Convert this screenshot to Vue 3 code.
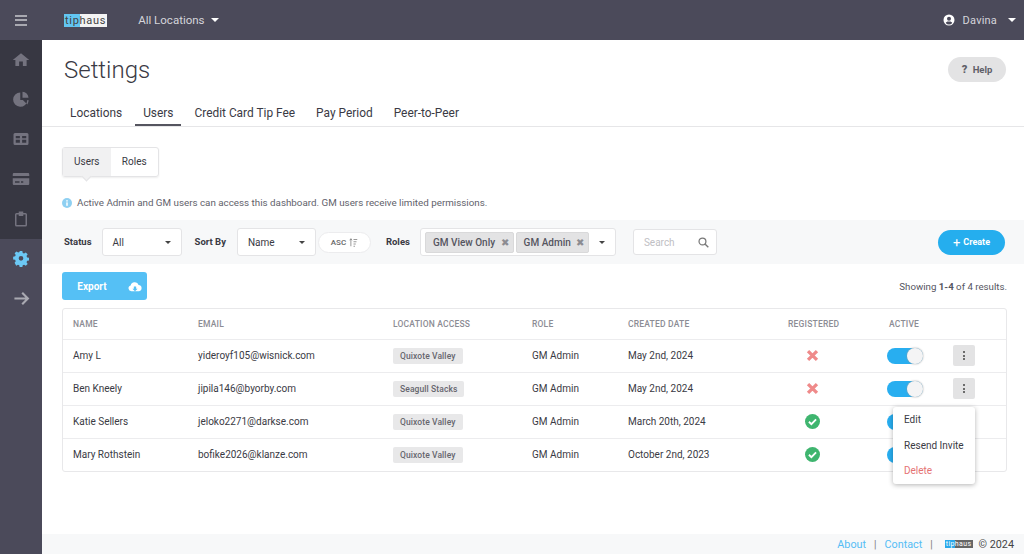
<script setup>
const sideIcons = [
	{ name: 'home', d: 'M12 3 1 12h3.500v8h5v-6h5v6h5v-8H23z' },
	{ name: 'pie', d: 'M11 2a9.500 9.500 0 1 0 9.500 10H11zM14 1v8h8a8.500 8.500 0 0 0-8-8zM14.500 12l6 6a9 9 0 0 0 1.500-6z' },
	{ name: 'table', d: 'M4 4h16a2 2 0 0 1 2 2v12a2 2 0 0 1-2 2H4a2 2 0 0 1-2-2V6a2 2 0 0 1 2-2zm1 4v3h5.500V8zm8.500 0v3H19V8zM5 13v4h5.500v-4zm8.500 0v4H19v-4z' },
	{ name: 'card', d: 'M1 5.500a1.500 1.500 0 0 1 1.500-1.500h19A1.500 1.500 0 0 1 23 5.500V8H1zM1 11h22v7.500a1.500 1.500 0 0 1-1.500 1.500h-19A1.500 1.500 0 0 1 1 18.500zm3 4v2h6v-2zm8 0v2h3v-2z' },
	{ name: 'clip', d: 'M9 2h6v2h3a2 2 0 0 1 2 2v14a2 2 0 0 1-2 2H6a2 2 0 0 1-2-2V6a2 2 0 0 1 2-2h3zM6 6v14h12V6h-3v2H9V6z' },
];

const users = [
	{ name: 'Amy L', email: 'yideroyf105@wisnick.com', location: 'Quixote Valley', created: 'May 2nd, 2024', registered: false, menu: true },
	{ name: 'Ben Kneely', email: 'jipila146@byorby.com', location: 'Seagull Stacks', created: 'May 2nd, 2024', registered: false, menu: true },
	{ name: 'Katie Sellers', email: 'jeloko2271@darkse.com', location: 'Quixote Valley', created: 'March 20th, 2024', registered: true, menu: false },
	{ name: 'Mary Rothstein', email: 'bofike2026@klanze.com', location: 'Quixote Valley', created: 'October 2nd, 2023', registered: true, menu: false },
];
</script>

<template>
	<div class="app">
		<header class="topbar">
			<div class="burger"><span></span><span></span><span></span></div>
			<div class="logo"><span class="logo-tip">tip</span><span class="logo-haus">haus</span></div>
			<div class="loc">All Locations <i class="caret"></i></div>
			<div class="user">
				<svg class="user-icon" viewBox="0 0 24 24"><path fill-rule="evenodd" d="M12 1a11 11 0 1 0 0 22 11 11 0 0 0 0-22zm0 4.500a4 4 0 1 1 0 8 4 4 0 0 1 0-8zM5.500 18c1-2 3-3 4.500-3h4c1.500 0 3.500 1 4.500 3a8.500 8.500 0 0 1-13 0z" fill="#fff" /></svg>
				<span class="user-name">Davina</span>
				<i class="caret"></i>
			</div>
		</header>

		<div class="body">
			<aside class="sidebar">
				<div class="side-top">
					<div v-for="icon in sideIcons" :key="icon.name" class="side-item">
						<svg viewBox="0 0 24 24" width="18" height="18"><path :d="icon.d" fill="#74737f" fill-rule="evenodd" /></svg>
					</div>
				</div>
				<div class="side-bottom">
					<div class="side-item">
						<svg viewBox="0 0 24 24" width="16" height="16"><path fill-rule="evenodd" fill="#6cc8f4" d="M10 0h4l.6 3 2 .9 2.600-1.700 2.800 2.800-1.700 2.600.9 2 3 .6v4l-3 .6-.9 2 1.700 2.600-2.800 2.800-2.600-1.700-2 .9-.6 3h-4l-.6-3-2-.9-2.600 1.700L2.400 17.800l1.700-2.600-.9-2-3-.6v-4l3-.6.9-2L2.400 3.400 5.200.6l2.600 1.700 2-.9zM12 7.500a3.500 3.500 0 1 0 0 7 3.500 3.500 0 0 0 0-7z" /></svg>
					</div>
					<div class="side-item">
						<svg viewBox="0 0 24 24" width="17" height="17"><path d="M2 12h19M13 4l8 8-8 8" fill="none" stroke="#a9a9b1" stroke-width="3" /></svg>
					</div>
				</div>
			</aside>

			<main class="main">
				<div class="page-head">
					<h1>Settings</h1>
					<button class="help"><b>?</b> Help</button>
				</div>

				<nav class="tabs">
					<a>Locations</a>
					<a class="on">Users</a>
					<a>Credit Card Tip Fee</a>
					<a>Pay Period</a>
					<a>Peer-to-Peer</a>
				</nav>

				<div class="seg-wrap">
					<div class="seg">
						<span class="seg-on">Users</span>
						<span>Roles</span>
					</div>
				</div>

				<p class="info">
					<svg viewBox="0 0 16 16" width="10" height="10"><circle cx="8" cy="8" r="8" fill="#8fd0f2" /><rect x="6.800" y="7" width="2.400" height="5.500" fill="#fff" /><rect x="6.800" y="3.500" width="2.400" height="2.200" fill="#fff" /></svg>
					Active Admin and GM users can access this dashboard. GM users receive limited permissions.
				</p>

				<section class="filters">
					<label>Status</label>
					<div class="select status">All <i class="caret dark"></i></div>
					<label class="gap-l">Sort By</label>
					<div class="select sort">Name <i class="caret dark"></i></div>
					<div class="asc">ASC
						<svg viewBox="0 0 12 12" width="9" height="9"><path d="M2.500 1v10M1 3l1.500-2L4 3M6 2h5M6 5h4M6 8h3M6 11h2" fill="none" stroke="#777" stroke-width="1" /></svg>
					</div>
					<label class="gap-r">Roles</label>
					<div class="select roles">
						<span class="chip">GM View Only <em>✖</em></span>
						<span class="chip">GM Admin <em>✖</em></span>
						<i class="caret dark"></i>
					</div>
					<div class="select search">
						<span>Search</span>
						<svg viewBox="0 0 16 16" width="11" height="11"><circle cx="6.500" cy="6.500" r="5" fill="none" stroke="#777" stroke-width="1.800" /><path d="m10.500 10.500 4.500 4.500" stroke="#777" stroke-width="2" /></svg>
					</div>
					<button class="create"><span class="plus">+</span> Create</button>
				</section>

				<div class="actions-row">
					<button class="export">
						<span class="export-label">Export</span>
						<span class="export-icon">
							<svg viewBox="0 0 24 18" width="14" height="11"><path fill="#fff" fill-rule="evenodd" d="M6 17a5 5 0 0 1-1.500-9.800A7 7 0 0 1 18 6.500 5.300 5.300 0 0 1 19 17zM10 9v4H7.500l4.500 4 4.500-4H14V9z" /></svg>
						</span>
					</button>
					<div class="results">Showing <b>1-4</b> of 4 results.</div>
				</div>

				<div class="table-wrap">
					<div class="row head">
						<div>NAME</div>
						<div>EMAIL</div>
						<div>LOCATION ACCESS</div>
						<div>ROLE</div>
						<div>CREATED DATE</div>
						<div class="reg">REGISTERED</div>
						<div class="act">ACTIVE</div>
						<div></div>
					</div>
					<div v-for="user in users" :key="user.email" class="row">
						<div>{{ user.name }}</div>
						<div>{{ user.email }}</div>
						<div><span class="tag">{{ user.location }}</span></div>
						<div>GM Admin</div>
						<div>{{ user.created }}</div>
						<div class="reg">
							<svg v-if="user.registered" viewBox="0 0 16 16" width="15" height="15"><circle cx="8" cy="8" r="8" fill="#3fb56f" /><path d="m4.200 8.300 2.600 2.500 5-5" fill="none" stroke="#fff" stroke-width="2" /></svg>
							<svg v-else viewBox="0 0 16 16" width="13" height="13"><path d="m2.500 2.500 11 11M13.500 2.500l-11 11" stroke="#ef8a8a" stroke-width="4" /></svg>
						</div>
						<div class="act">
							<span class="toggle"><span class="knob"></span></span>
						</div>
						<div>
							<span v-if="user.menu" class="kebab"><i></i><i></i><i></i></span>
						</div>
					</div>

					<div class="menu">
						<div>Edit</div>
						<div>Resend Invite</div>
						<div class="del">Delete</div>
					</div>
				</div>

				<footer class="footer">
					<a>About</a>
					<span class="sep">|</span>
					<a>Contact</a>
					<span class="sep">|</span>
					<span class="logo small"><span class="logo-tip">tip</span><span class="logo-haus">haus</span></span>
					<span class="copy">© 2024</span>
				</footer>
			</main>
		</div>
	</div>
</template>

<style>
html,
body {
	margin: 0;
	background: #fff;
}
</style>

<style scoped>
.app {
	width: 1024px;
	height: 554px;
	display: flex;
	flex-direction: column;
	overflow: hidden;
	font-family: Roboto, "Liberation Sans", sans-serif;
	color: #3a3a44;
}

.topbar {
	height: 40px;
	flex: none;
	background: #4b4a5a;
	display: flex;
	align-items: center;
	color: #d5d5da;
	box-sizing: border-box;
}

.burger {
	width: 12px;
	margin: 0 0 0 15px;
	display: flex;
	flex-direction: column;
	gap: 2.500px;
}

.burger span {
	height: 2px;
	background: #a9a9b1;
}

.logo {
	margin-left: 37px;
	display: flex;
	font-size: 11px;
	line-height: 13px;
	letter-spacing: .7px;
	color: #444;
}

.logo-tip {
	background: #62c6f2;
	padding-left: 1px;
}

.logo-haus {
	background: #f4f4f4;
	padding-right: 1px;
}

.loc {
	margin: -1px 0 0 31px;
	font-size: 11.500px;
	display: flex;
	align-items: center;
	gap: 6px;
}

.caret {
	display: inline-block;
	width: 0;
	height: 0;
	border-left: 4px solid transparent;
	border-right: 4px solid transparent;
	border-top: 4px solid #fff;
}

.caret.dark {
	border-left-width: 3px;
	border-right-width: 3px;
	border-top: 3px solid #444;
}

.user {
	margin-left: auto;
	margin-right: 8px;
	display: flex;
	align-items: center;
	font-size: 11px;
	letter-spacing: .2px;
}

.user-icon {
	width: 12px;
	height: 12px;
	margin-right: 8px;
}

.user-name {
	margin-right: 11px;
}

.body {
	flex: 1;
	display: flex;
	min-height: 0;
}

.sidebar {
	width: 42px;
	flex: none;
	display: flex;
	flex-direction: column;
	background: #4b4a5a;
}

.side-top {
	background: #373742;
}

.side-item {
	height: 39.800px;
	display: flex;
	align-items: center;
	justify-content: center;
}

.main {
	flex: 1;
	min-width: 0;
	position: relative;
	display: flex;
	flex-direction: column;
}

.page-head {
	height: 59px;
	flex: none;
	display: flex;
	align-items: center;
	justify-content: space-between;
	padding: 0 18px 0 22px;
}

h1 {
	margin: 1px 0 0;
	font-size: 24px;
	font-weight: 300;
	color: #3a3a44;
}

.help {
	height: 25px;
	width: 58px;
	margin-top: -1px;
	border: 0;
	border-radius: 13px;
	background: #e3e3e4;
	font-family: inherit;
	font-size: 9.500px;
	font-weight: 700;
	color: #5f5f68;
	padding: 0;
}

.help b {
	font-size: 11px;
	margin-right: 3px;
}

.tabs {
	height: 27px;
	flex: none;
	display: flex;
	gap: 5px;
	padding-left: 20px;
	border-bottom: 1px solid #e6e6e8;
	font-size: 11.900px;
}

.tabs a {
	padding: 0 8px;
	line-height: 27px;
	height: 26px;
	box-sizing: border-box;
	margin-top: 1px;
}

.tabs a.on {
	border-bottom: 2px solid #55555f;
}

.seg-wrap {
	padding: 20px 0 0 20px;
	flex: none;
}

.seg {
	display: inline-flex;
	height: 30px;
	box-sizing: border-box;
	border: 1px solid #e4e4e6;
	border-radius: 3px;
	font-size: 10px;
	line-height: 28px;
	box-shadow: 0 1px 2px #eee;
}

.seg span {
	width: 47.500px;
	text-align: center;
}

.seg .seg-on {
	background: #f1f1f2;
	position: relative;
}

.seg .seg-on::after {
	content: "";
	position: absolute;
	left: 20px;
	bottom: -4px;
	width: 6px;
	height: 6px;
	background: #f1f1f2;
	transform: rotate(45deg);
	border-right: 1px solid #e4e4e6;
	border-bottom: 1px solid #e4e4e6;
}

.info {
	margin: 19px 0 0 20px;
	height: 13px;
	line-height: 13px;
	font-size: 9.800px;
	color: #62626b;
	display: flex;
	align-items: center;
	gap: 5px;
	flex: none;
}

.filters {
	margin-top: 11px;
	height: 44px;
	flex: none;
	background: #f7f8f9;
	display: flex;
	align-items: center;
	padding-left: 22px;
	font-size: 10px;
	box-sizing: border-box;
}

.filters label {
	font-weight: 700;
	font-size: 9.500px;
	margin-right: 10px;
	margin-top: -2px;
}

.filters .gap-l {
	margin-left: 13px;
	margin-right: 11px;
}

.filters .gap-r {
	margin-left: 15px;
	margin-right: 10px;
}

.select {
	height: 28px;
	box-sizing: border-box;
	background: #fff;
	border: 1px solid #e4e4e6;
	border-radius: 3px;
	display: flex;
	align-items: center;
	justify-content: space-between;
	padding: 0 10px;
}

.status {
	width: 80px;
}

.sort {
	width: 79px;
}

.asc {
	width: 53px;
	height: 21px;
	box-sizing: border-box;
	margin-left: 2px;
	background: #fff;
	border: 1px solid #ececee;
	border-radius: 11px;
	font-size: 8px;
	font-weight: 500;
	color: #666;
	display: flex;
	align-items: center;
	justify-content: center;
	gap: 3px;
}

.roles {
	width: 196px;
	padding: 0 10px 0 4px;
	justify-content: flex-start;
	gap: 2px;
}

.roles .caret {
	margin-left: auto;
}

.chip {
	height: 21px;
	line-height: 19px;
	padding: 0 4px 0 7px;
	background: #e3e3e4;
	border: 1px solid #d9d9da;
	box-sizing: border-box;
	border-radius: 2px;
	font-size: 10px;
	font-weight: 500;
	color: #55555f;
	white-space: nowrap;
}

.chip em {
	font-style: normal;
	font-size: 10px;
	color: #8c8c92;
	margin-left: 3px;
}

.search {
	width: 84px;
	height: 26px;
	margin-left: 17px;
	color: #c0c0c4;
	padding: 0 7px 0 10px;
}

.create {
	margin-left: auto;
	margin-right: 19px;
	width: 67px;
	height: 25px;
	padding: 0;
	border: 0;
	border-radius: 13px;
	background: #25aeee;
	color: #fff;
	font-family: inherit;
	font-size: 9px;
	font-weight: 700;
	display: flex;
	align-items: center;
	justify-content: center;
	gap: 3px;
}

.plus {
	font-size: 13px;
	line-height: 13px;
	font-weight: 400;
}

.actions-row {
	height: 28px;
	margin-top: 8px;
	padding: 0 17px 0 20px;
	flex: none;
	display: flex;
	align-items: center;
	justify-content: space-between;
}

.export {
	width: 85px;
	height: 28px;
	padding: 0;
	border: 0;
	border-radius: 3px;
	background: #55c0f5;
	color: #fff;
	font-family: inherit;
	font-size: 10px;
	font-weight: 700;
	display: flex;
	align-items: center;
}

.export-label {
	width: 60px;
	text-align: center;
}

.export-icon {
	flex: 1;
	display: flex;
	align-items: center;
	justify-content: center;
}

.results {
	font-size: 9.700px;
	color: #55555f;
}

.table-wrap {
	position: relative;
	margin: 8px 17px 0 20px;
	border: 1px solid #e8e8ea;
	border-radius: 3px;
	flex: none;
	font-size: 10px;
}

.row {
	display: grid;
	grid-template-columns: 125px 195px 139px 96px 160px 101px 64px 1fr;
	height: 33px;
	align-items: center;
	padding: 0 0 1px 10px;
	border-top: 1px solid #ececee;
	box-sizing: border-box;
}

.row.head {
	height: 30px;
	border-top: 0;
	font-size: 8.500px;
	font-weight: 500;
	letter-spacing: .2px;
	color: #8c8c94;
}

.reg {
	display: flex;
	justify-content: center;
	width: 49px;
}

.head .reg {
	justify-content: flex-start;
}

.act {
	display: flex;
}

.tag {
	display: inline-block;
	height: 16px;
	line-height: 16px;
	padding: 0 7px;
	border-radius: 2px;
	background: #e8e8e9;
	font-size: 8.500px;
	font-weight: 500;
	letter-spacing: .1px;
	color: #66666e;
}

.toggle {
	position: relative;
	width: 36px;
	height: 16px;
	margin-left: -2px;
	border-radius: 8px;
	background: #28aef0;
	display: block;
}

.knob {
	position: absolute;
	right: 0;
	top: 0;
	width: 16px;
	height: 16px;
	border-radius: 50%;
	background: #f4f4f5;
	box-shadow: 0 0 2px #999;
}

.kebab {
	width: 22px;
	height: 21px;
	border-radius: 2px;
	background: #e3e3e4;
	display: flex;
	flex-direction: column;
	align-items: center;
	justify-content: center;
	gap: 1.500px;
}

.kebab i {
	width: 2px;
	height: 2px;
	border-radius: 50%;
	background: #444;
}

.menu {
	position: absolute;
	left: 830px;
	top: 98px;
	width: 82px;
	height: 77px;
	box-sizing: border-box;
	background: #fff;
	border-radius: 3px;
	box-shadow: 0 1px 5px rgba(0, 0, 0, .3);
	font-size: 10px;
}

.menu div {
	height: 25.500px;
	line-height: 25.500px;
	padding-left: 11px;
}

.menu .del {
	color: #e57373;
}

.footer {
	margin-top: auto;
	height: 20px;
	flex: none;
	background: #f7f8f9;
	display: flex;
	align-items: center;
	justify-content: flex-end;
	padding-right: 10px;
	font-size: 10.800px;
}

.footer a {
	color: #55bdf5;
}

.sep {
	margin: 0 8px;
	font-size: 10px;
	color: #777;
}

.logo.small {
	margin-left: 4px;
	font-size: 7px;
	line-height: 8px;
	letter-spacing: .4px;
	color: #fff;
}

.logo.small .logo-haus {
	background: #666;
}

.logo.small .logo-tip {
	background: #2aa8ea;
}

.copy {
	margin-left: 6px;
	color: #444;
}
</style>
